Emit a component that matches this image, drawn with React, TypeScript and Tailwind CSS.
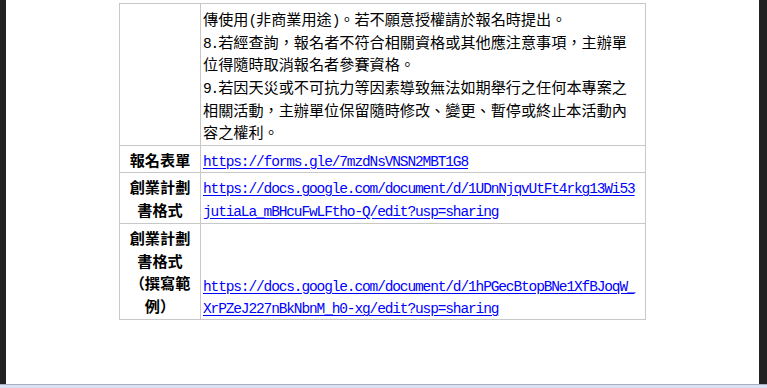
import React from "react";

const cjk = { fontFamily: '"Noto Sans CJK TC", "Noto Sans CJK SC", sans-serif' };

function Half({ children }: { children: React.ReactNode }) {
  return (
    <span className="font-['Liberation_Mono',monospace] text-[14.5px] leading-none tracking-[-1.13px]">
      {children}
    </span>
  );
}

function Line({ children }: { children: React.ReactNode }) {
  return <div className="h-[22.7px] whitespace-nowrap">{children}</div>;
}

function Link({ lines }: { lines: string[] }) {
  return (
    <>
      {lines.map((l, i) => (
        <Line key={i}>
          <a
            href="#"
            className="font-['Liberation_Mono',monospace] text-[14.5px] leading-none tracking-[-1.13px] text-[#0000ff] underline underline-offset-[2px]"
          >
            {l}
          </a>
        </Line>
      ))}
    </>
  );
}

function Head({ lines }: { lines: string[] }) {
  return (
    <>
      {lines.map((l, i) => (
        <div key={i} className="h-[22.7px] whitespace-nowrap font-bold">
          {l}
        </div>
      ))}
    </>
  );
}

export default function App() {
  return (
    <div className="w-[767px] h-[388px] flex flex-col overflow-hidden bg-white">
      <div className="flex flex-1 min-h-0">
        <div className="w-[6px] bg-[#222222]" />
        <div className="flex-1 bg-white">
          <div
            className="ml-[113px] mt-[3px] w-[527px] border-l border-t border-[#c8c8c8] text-[15.15px] leading-[22.7px] text-black"
            style={cjk}
          >
            <div className="flex h-[142px]">
              <div className="w-[81px] border-r border-b border-[#c8c8c8]" />
              <div className="w-[445px] border-r border-b border-[#c8c8c8] pl-[2px] pt-[3px]">
                <Line>
                  傳使用<Half>(</Half>非商業用途<Half>)</Half>。若不願意授權請於報名時提出。
                </Line>
                <Line>
                  <Half>8.</Half>若經查詢，報名者不符合相關資格或其他應注意事項，主辦單
                </Line>
                <Line>位得隨時取消報名者參賽資格。</Line>
                <Line>
                  <Half>9.</Half>若因天災或不可抗力等因素導致無法如期舉行之任何本專案之
                </Line>
                <Line>相關活動，主辦單位保留隨時修改、變更、暫停或終止本活動內</Line>
                <Line>容之權利。</Line>
              </div>
            </div>
            <div className="flex h-[27px]">
              <div className="w-[81px] border-r border-b border-[#c8c8c8] pt-[2px] text-center">
                <Head lines={["報名表單"]} />
              </div>
              <div className="w-[445px] border-r border-b border-[#c8c8c8] pl-[2px] pt-[2px]">
                <Link lines={["https://forms.gle/7mzdNsVNSN2MBT1G8"]} />
              </div>
            </div>
            <div className="flex h-[51px]">
              <div className="w-[81px] border-r border-b border-[#c8c8c8] pt-[2px] text-center">
                <Head lines={["創業計劃", "書格式"]} />
              </div>
              <div className="w-[445px] border-r border-b border-[#c8c8c8] pl-[2px] pt-[2px]">
                <Link
                  lines={[
                    "https://docs.google.com/document/d/1UDnNjqvUtFt4rkg13Wi53",
                    "jutiaLa_mBHcuFwLFtho-Q/edit?usp=sharing",
                  ]}
                />
              </div>
            </div>
            <div className="flex h-[96px]">
              <div className="w-[81px] border-r border-b border-[#c8c8c8] pt-[2px] text-center">
                <Head lines={["創業計劃", "書格式", "（撰寫範", "例）"]} />
              </div>
              <div className="w-[445px] border-r border-b border-[#c8c8c8] pl-[2px] flex flex-col justify-end pb-[1px]">
                <Link
                  lines={[
                    "https://docs.google.com/document/d/1hPGecBtopBNe1XfBJoqW_",
                    "XrPZeJ227nBkNbnM_h0-xg/edit?usp=sharing",
                  ]}
                />
              </div>
            </div>
          </div>
        </div>
        <div className="w-[8px] bg-[#222222]" />
      </div>
      <div className="h-[1px] bg-[#a9b0c2]" />
      <div className="h-[3px] bg-[#d9e1f2]" />
    </div>
  );
}
